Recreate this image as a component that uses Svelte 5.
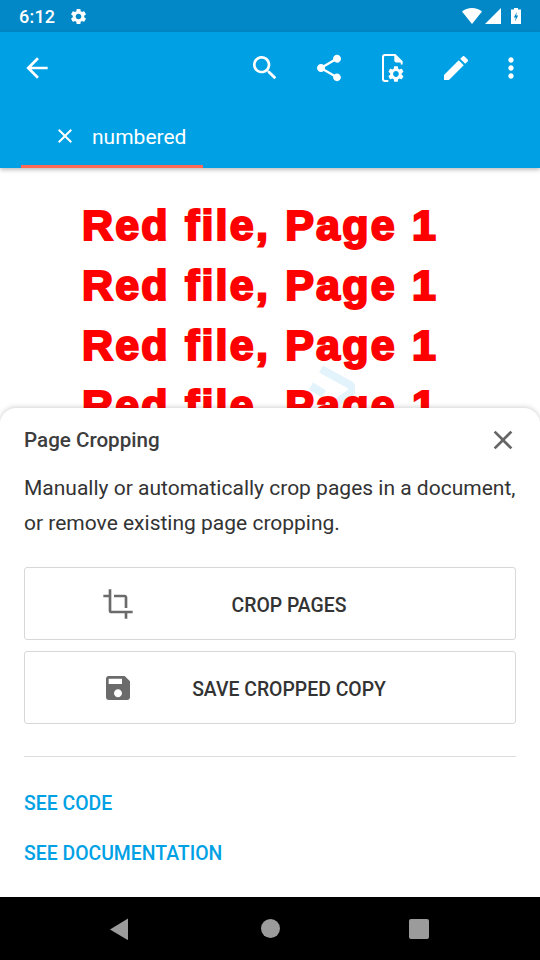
<script>
	const icons = {
		back: 'M20 11H7.83l5.59-5.59L12 4l-8 8 8 8 1.41-1.41L7.83 13H20v-2z',
		search: 'M15.5 14h-.79l-.28-.27C15.41 12.59 16 11.11 16 9.5 16 5.91 13.09 3 9.5 3S3 5.91 3 9.5 5.91 16 9.5 16c1.61 0 3.09-.59 4.23-1.57l.27.28v.79l5 4.99L20.49 19l-4.99-5zm-6 0C7.01 14 5 11.99 5 9.5S7.01 5 9.5 5 14 7.01 14 9.5 11.99 14 9.5 14z',
		share: 'M18 16.08c-.76 0-1.44.3-1.96.77L8.91 12.7c.05-.23.09-.46.09-.7s-.04-.47-.09-.7l7.05-4.11c.54.5 1.25.81 2.04.81 1.66 0 3-1.34 3-3s-1.34-3-3-3-3 1.34-3 3c0 .24.04.47.09.7L8.04 9.81C7.5 9.31 6.79 9 6 9c-1.66 0-3 1.34-3 3s1.34 3 3 3c.79 0 1.5-.31 2.04-.81l7.12 4.16c-.05.21-.08.43-.08.65 0 1.61 1.31 2.92 2.92 2.92 1.61 0 2.92-1.31 2.92-2.92s-1.31-2.92-2.92-2.92z',
		edit: 'M3 17.25V21h3.75L17.81 9.94l-3.75-3.75L3 17.25zM20.71 7.04c.39-.39.39-1.02 0-1.41l-2.34-2.34c-.39-.39-1.02-.39-1.41 0l-1.83 1.83 3.75 3.75 1.83-1.83z',
		more: 'M12 8c1.1 0 2-.9 2-2s-.9-2-2-2-2 .9-2 2 .9 2 2 2zm0 2c-1.1 0-2 .9-2 2s.9 2 2 2 2-.9 2-2-.9-2-2-2zm0 6c-1.1 0-2 .9-2 2s.9 2 2 2 2-.9 2-2-.9-2-2-2z',
		gear: 'M19.14 12.94c.04-.3.06-.61.06-.94 0-.32-.02-.64-.07-.94l2.03-1.58c.18-.14.23-.41.12-.61l-1.92-3.32c-.12-.22-.37-.29-.59-.22l-2.39.96c-.5-.38-1.03-.7-1.62-.94l-.36-2.54c-.04-.24-.24-.41-.48-.41h-3.84c-.24 0-.43.17-.47.41l-.36 2.54c-.59.24-1.13.57-1.62.94l-2.39-.96c-.22-.08-.47 0-.59.22L2.74 8.87c-.12.21-.08.47.12.61l2.03 1.58c-.05.3-.09.63-.09.94s.02.64.07.94l-2.03 1.58c-.18.14-.23.41-.12.61l1.92 3.32c.12.22.37.29.59.22l2.39-.96c.5.38 1.03.7 1.62.94l.36 2.54c.05.24.24.41.48.41h3.84c.24 0 .44-.17.47-.41l.36-2.54c.59-.24 1.13-.56 1.62-.94l2.39.96c.22.08.47 0 .59-.22l1.92-3.32c.12-.22.07-.47-.12-.61l-2.01-1.58zM12 15.6c-1.98 0-3.6-1.62-3.6-3.6s1.62-3.6 3.6-3.6 3.6 1.62 3.6 3.6-1.62 3.6-3.6 3.6z',
		crop: 'M17 15h2V7c0-1.1-.9-2-2-2H9v2h8v8zM7 17V1H5v4H1v2h4v10c0 1.1.9 2 2 2h10v4h2v-4h4v-2H7z',
		save: 'M17 3H5c-1.11 0-2 .9-2 2v14c0 1.1.89 2 2 2h14c1.1 0 2-.9 2-2V7l-4-4zm-5 16c-1.66 0-3-1.34-3-3s1.34-3 3-3 3 1.34 3 3-1.34 3-3 3zm3-10H5V5h10v4z',
		close: 'M19 6.41L17.59 5 12 10.59 6.41 5 5 6.41 10.59 12 5 17.59 6.41 19 12 13.41 17.59 19 19 17.59 13.41 12z'
	};

	const lines = [1, 2, 3, 4];
</script>

{#snippet icon(name, cls)}
	<svg class={cls} viewBox="0 0 24 24" aria-hidden="true"><path d={icons[name]} /></svg>
{/snippet}

<div class="screen">
	<header class="status">
		<span class="time">6:12</span>
		{@render icon('gear', 'status-gear')}
		<div class="status-right">
			<svg class="wifi" viewBox="0 0 20 16"><path d="M10 16L0 3.6C2.6 1.4 6.1 0 10 0s7.4 1.4 10 3.6z" /></svg>
			<svg class="signal" viewBox="0 0 16 16"><path d="M16 0v16H0z" /></svg>
			<svg class="battery" viewBox="0 0 10 16">
				<path d="M3 0h4v1.500h3V16H0V1.500h3z" />
				<path class="bolt" d="M5.800 4L2.800 9.500h2L4 13.500l3.200-6h-2z" />
			</svg>
		</div>
	</header>

	<div class="toolbar">
		<div class="actions">
			<button class="act back">{@render icon('back', 'ic')}</button>
			<span class="spacer"></span>
			<button class="act">{@render icon('search', 'ic')}</button>
			<button class="act">{@render icon('share', 'ic')}</button>
			<button class="act">
				<svg class="ic" viewBox="0 0 24 24" aria-hidden="true">
					<path class="doc" d="M8.500 21.700H6A1.500 1.500 0 0 1 4.500 20.200V3.800A1.500 1.500 0 0 1 6 2.300h7.500l5 5v2" />
					<path d="M13 2.500v3.800A1.500 1.500 0 0 0 14.500 7.800h4z" />
					<path transform="translate(7 9.300) scale(.6)" d={icons.gear} />
				</svg>
			</button>
			<button class="act edit">{@render icon('edit', 'ic')}</button>
			<button class="act more">{@render icon('more', 'ic')}</button>
		</div>
		<div class="tabs">
			<div class="tab">
				{@render icon('close', 'tab-close')}
				<span>numbered</span>
			</div>
		</div>
	</div>

	<main class="content">
		<svg class="watermark" viewBox="0 0 50 50">
			<path d="M16 5l29 16q5 5-1 9L20 46" />
			<path d="M6 22l13 8" />
		</svg>
		<div class="page">
			{#each lines as n (n)}
				<p class="pdf-line">Red file, Page 1</p>
			{/each}
		</div>

		<section class="sheet">
			<div class="sheet-head">
				<h2>Page Cropping</h2>
				<button class="sheet-close">{@render icon('close', 'ic-close')}</button>
			</div>
			<p class="desc">Manually or automatically crop pages in a document, or remove existing page cropping.</p>
			<button class="big-btn">{@render icon('crop', 'btn-ic')}<span>CROP PAGES</span></button>
			<button class="big-btn">{@render icon('save', 'btn-ic')}<span>SAVE CROPPED COPY</span></button>
			<hr />
			<a class="link" href="#code">SEE CODE</a>
			<a class="link" href="#docs">SEE DOCUMENTATION</a>
		</section>
	</main>

	<nav class="navbar">
		<svg class="nav-ic" viewBox="0 0 20 22"><path d="M19 0.500v21a.500.500 0 0 1-.700.300L1 11.500z" /></svg>
		<span class="home"></span>
		<span class="recent"></span>
	</nav>
</div>

<style>
	:global(body) {
		margin: 0;
		background: #fff;
	}

	.screen {
		width: 540px;
		height: 960px;
		display: flex;
		flex-direction: column;
		overflow: hidden;
		font-family: Roboto, sans-serif;
	}

	button {
		background: none;
		border: 0;
		padding: 0;
		font: inherit;
	}

	/* Status bar */
	.status {
		height: 32px;
		flex: none;
		background: #0288c6;
		color: #fff;
		display: flex;
		align-items: center;
		padding: 0 19px;
	}

	.time {
		font-size: 18px;
		font-weight: 500;
		letter-spacing: 0.2px;
	}

	:global(.status-gear) {
		width: 19px;
		height: 19px;
		fill: #fff;
		margin-left: 14px;
	}

	.status-right {
		margin-left: auto;
		display: flex;
		align-items: center;
	}

	.status-right svg {
		fill: #fff;
		display: block;
	}

	.wifi {
		width: 20px;
		height: 16px;
	}

	.signal {
		width: 16px;
		height: 16px;
		margin-left: 3px;
	}

	.battery {
		width: 10px;
		height: 16px;
		margin-left: 10px;
	}

	.status-right .bolt {
		fill: #0288c6;
	}

	/* Toolbar */
	.toolbar {
		height: 136px;
		flex: none;
		background: #00a1e4;
		color: #fff;
		display: flex;
		flex-direction: column;
		box-shadow: 0 2px 4px rgba(0, 0, 0, 0.25);
		position: relative;
		z-index: 1;
	}

	.actions {
		height: 72px;
		display: flex;
		align-items: center;
		padding-right: 5px;
	}

	.spacer {
		flex: 1;
	}

	.act {
		width: 64px;
		height: 64px;
		display: flex;
		align-items: center;
		justify-content: center;
	}

	.act.back {
		width: 32px;
		margin-left: 21px;
	}

	.act.edit {
		width: 62px;
	}

	.act.more {
		width: 48px;
	}

	:global(.ic) {
		width: 32px;
		height: 32px;
		fill: #fff;
	}

	.doc {
		fill: none;
		stroke: #fff;
		stroke-width: 1.500;
	}

	.tabs {
		margin-top: auto;
		display: flex;
		padding-left: 21px;
	}

	.tab {
		width: 182px;
		height: 61px;
		box-sizing: border-box;
		border-bottom: 3px solid #ff6a55;
		display: flex;
		align-items: center;
		font-size: 21px;
		padding: 2px 0 0 32px;
	}

	:global(.tab-close) {
		width: 24px;
		height: 24px;
		fill: #fff;
		margin-right: 15px;
		margin-top: -2px;
		flex: none;
	}

	/* Document behind the sheet */
	.content {
		flex: 1;
		position: relative;
		overflow: hidden;
		background: #fff;
	}

	.page {
		position: relative;
		padding-top: 27px;
		display: flex;
		flex-direction: column;
		align-items: center;
	}

	.pdf-line {
		margin: 0;
		height: 60px;
		line-height: 60px;
		font-family: 'Liberation Sans', Arial, sans-serif;
		font-weight: 700;
		font-size: 43px;
		letter-spacing: 2.200px;
		word-spacing: 1px;
		color: #f00;
		-webkit-text-stroke: 2.200px #f00;
		white-space: nowrap;
		transform: translateX(-10px);
	}

	.watermark {
		position: absolute;
		left: 305px;
		top: 196px;
		width: 50px;
		height: 50px;
		fill: none;
		stroke: #e3f3fb;
		stroke-width: 8;
	}

	/* Bottom sheet */
	.sheet {
		position: absolute;
		left: 0;
		right: 0;
		bottom: 0;
		height: 489px;
		box-sizing: border-box;
		background: #fff;
		border-radius: 16px 16px 0 0;
		box-shadow: 0 -1px 5px rgba(0, 0, 0, 0.18);
		padding: 0 24px;
		display: flex;
		flex-direction: column;
	}

	.sheet-head {
		height: 64px;
		display: flex;
		align-items: center;
		justify-content: space-between;
	}

	h2 {
		margin: 0;
		font-size: 20.600px;
		font-weight: 500;
		color: #3d3d3d;
	}

	.sheet-close {
		display: flex;
		margin-right: -3px;
	}

	:global(.ic-close) {
		width: 32px;
		height: 32px;
		fill: #666;
	}

	.desc {
		margin: -1px 0 26px;
		font-size: 21px;
		line-height: 35px;
		color: #333;
	}

	.big-btn {
		height: 73px;
		flex: none;
		box-sizing: border-box;
		border: 1.500px solid #d8d8d8;
		border-radius: 3px;
		display: flex;
		align-items: center;
		padding: 3px 72px 0 77px;
		margin-bottom: 11px;
		font-size: 19.400px;
		font-weight: 500;
		color: #333;
	}

	.big-btn span {
		flex: 1;
		text-align: center;
	}

	:global(.btn-ic) {
		width: 32px;
		height: 32px;
		fill: #6b6b6b;
		flex: none;
		margin-top: -3px;
		margin-right: 1px;
	}

	hr {
		width: 100%;
		margin: 21px 0 0;
		border: 0;
		border-top: 1.500px solid #dcdcdc;
	}

	.link {
		height: 50px;
		display: flex;
		align-items: center;
		color: #00a1e4;
		font-size: 19.400px;
		font-weight: 500;
		text-decoration: none;
	}

	hr + .link {
		margin-top: 21px;
	}

	/* Android nav bar */
	.navbar {
		height: 63px;
		flex: none;
		background: #000;
		display: flex;
		align-items: center;
		justify-content: center;
		padding-right: 2px;
	}

	.nav-ic {
		width: 20px;
		height: 22px;
		fill: #9b9b9b;
		margin-right: 132px;
	}

	.home {
		width: 19px;
		height: 19px;
		border-radius: 50%;
		background: #9b9b9b;
	}

	.recent {
		width: 20px;
		height: 20px;
		border-radius: 2px;
		background: #9b9b9b;
		margin-left: 129px;
	}
</style>
